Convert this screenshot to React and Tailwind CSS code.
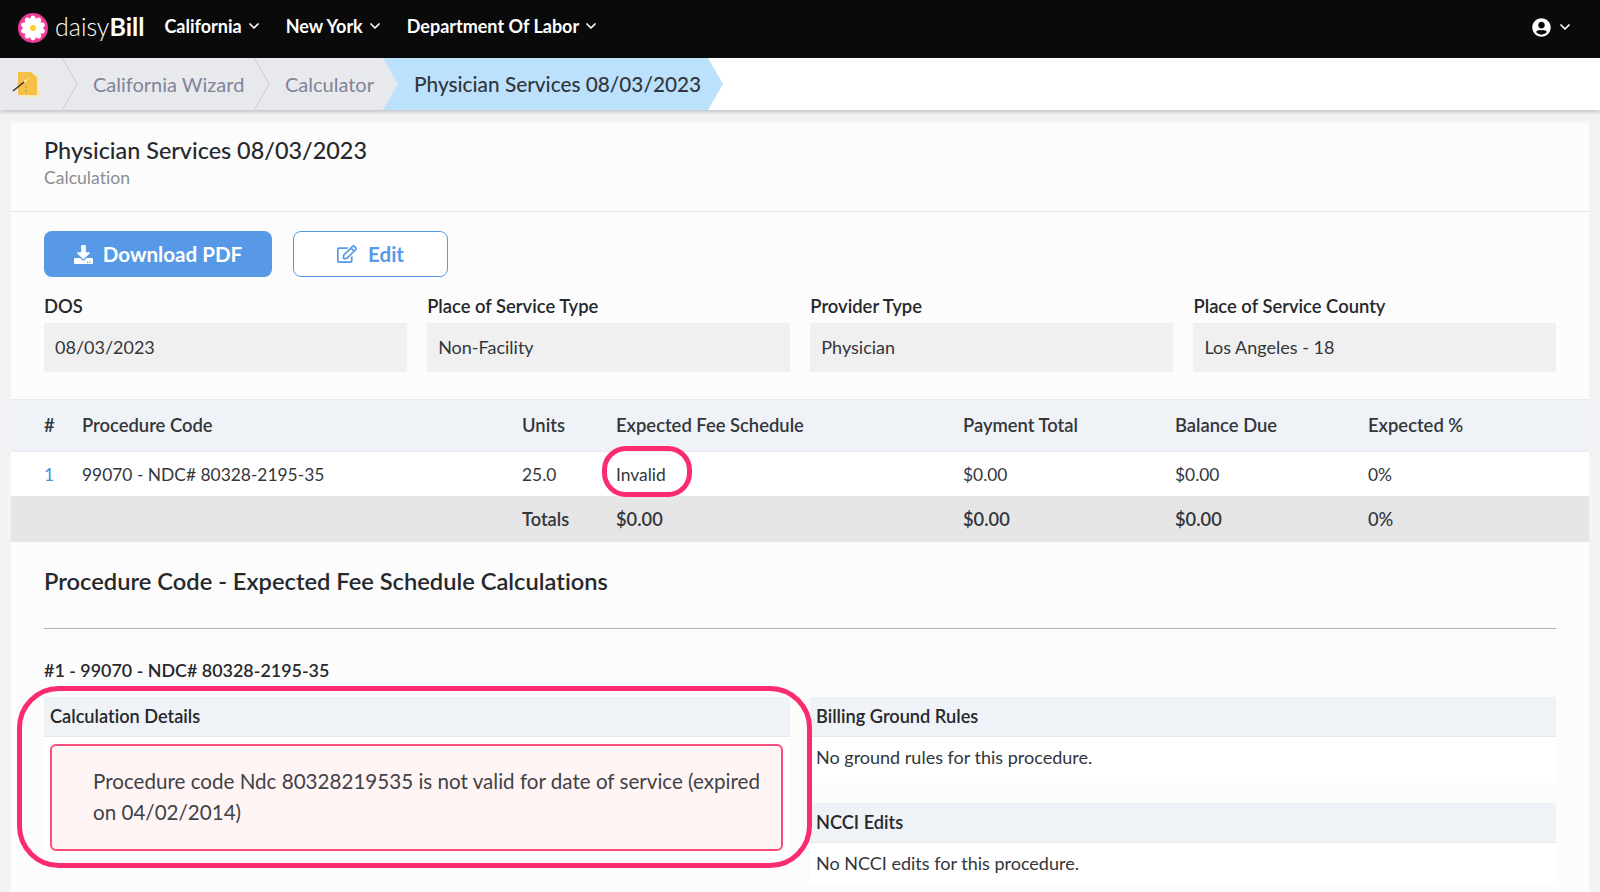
import React from 'react';
import { FaDownload, FaRegEdit, FaUserCircle } from 'react-icons/fa';
import { ChevronDown } from 'lucide-react';

const PETALS = [0, 36, 72, 108, 144, 180, 216, 252, 288, 324];

function DaisyLogo() {
  return (
    <svg viewBox="0 0 30 30" className="h-[30px] w-[30px] shrink-0">
      <circle cx="15" cy="15" r="15" fill="#ee3d96" />
      {PETALS.map((angle) => (
        <ellipse key={angle} cx="15" cy="7.6" rx="3.1" ry="5" fill="#ffffff" transform={`rotate(${angle} 15 15)`} />
      ))}
      <circle cx="15" cy="15" r="3" fill="#fbd52c" />
    </svg>
  );
}

function WizardIcon() {
  return (
    <svg viewBox="0 0 28 28" className="h-7 w-7 shrink-0">
      <path d="M8 4h17l2 23H10z" fill="#f8e6b4" />
      <path d="M6 2h13l6 6v17H6z" fill="#f6bf45" />
      <path d="M1 21l11-9" stroke="#333333" strokeWidth="1.6" />
      <path d="M12 12l3-2.5" stroke="#fff4c4" strokeWidth="1.6" />
      <circle cx="17" cy="8" r="0.8" fill="#fff4c4" />
      <circle cx="14" cy="17" r="0.9" fill="#d9a02e" />
      <circle cx="14" cy="21" r="0.9" fill="#66b36b" />
    </svg>
  );
}

function CrumbChevron() {
  return (
    <svg viewBox="0 0 16 52" className="h-[52px] w-4 shrink-0" fill="none">
      <path d="M0.5 0L15 26L0.5 52" stroke="#c9cbd2" strokeWidth="1" />
    </svg>
  );
}

function NavItem({ label }) {
  return (
    <button className="flex items-center gap-[4px] text-[18px] font-bold text-white">
      {label}
      <ChevronDown className="h-[16px] w-[16px]" strokeWidth={2.6} />
    </button>
  );
}

function Field({ label, value }) {
  return (
    <div>
      <div className="text-[18.4px] font-semibold leading-[24px] text-[#26282c]">{label}</div>
      <div className="mt-[5px] flex h-[49px] items-center bg-[#f0f0f0] px-[11px] text-[18px] text-[#33363b]">{value}</div>
    </div>
  );
}

function PanelHeader({ children }) {
  return (
    <div className="flex h-[40px] items-center border-b border-[#e6e8ec] bg-[#eff2f7] px-[6px] text-[18.2px] font-semibold text-[#26282c]">
      {children}
    </div>
  );
}

const ROW_CLASS = 'grid grid-cols-[38px_440px_94px_347px_212px_193px_1fr] items-center pl-[33px]';

export default function App() {
  return (
    <div className="h-[892px] overflow-hidden bg-[#f3f3f5] font-['Lato',sans-serif] text-[#33363b] [font-variant-ligatures:none]">
      <header className="flex h-[58px] items-center bg-[#0a0a0a] pb-[3px] pl-[18px] pr-[27px]">
        <DaisyLogo />
        <div className="ml-[7px] pb-[3px] text-[25px] font-light leading-none text-white">
          daisy<span className="font-bold">Bill</span>
        </div>
        <nav className="ml-[20px] flex items-center gap-[24px] pb-[3px]">
          <NavItem label="California" />
          <NavItem label="New York" />
          <NavItem label="Department Of Labor" />
        </nav>
        <div className="ml-auto flex items-center gap-[6px] pb-[1px] text-white">
          <FaUserCircle className="h-[19px] w-[19px]" />
          <ChevronDown className="h-[16px] w-[16px]" strokeWidth={2.6} />
        </div>
      </header>

      <div className="flex h-[52px] bg-white shadow-[0_2px_4px_rgba(0,0,0,0.2)]">
        <div className="flex w-[398px] items-center bg-[#e8e9ed] text-[20px] text-[#7f8498]">
          <div className="w-[62px] pl-[12px]">
            <WizardIcon />
          </div>
          <CrumbChevron />
          <span className="ml-[15px] w-[161px]">California Wizard</span>
          <CrumbChevron />
          <span className="ml-[15px]">Calculator</span>
        </div>
        <div className="-ml-[15px] flex w-[340px] items-center bg-[#bbe1fd] pl-[31px] text-[20.8px] font-medium text-[#33363b] [clip-path:polygon(0_0,calc(100%-15px)_0,100%_50%,calc(100%-15px)_100%,0_100%,15px_50%)]">
          Physician Services 08/03/2023
        </div>
      </div>

      <main className="mx-[11px] mt-[13px] h-[769px] bg-[#fcfcfc]">
        <div className="h-[89px] border-b border-[#e8e8e8] px-[33px] pt-[11px]">
          <h1 className="text-[23.4px] font-medium leading-[32px] text-[#26282c]">Physician Services 08/03/2023</h1>
          <p className="text-[17.6px] leading-[24px] text-[#8a8d92]">Calculation</p>
        </div>

        <div className="px-[33px] pt-[19px]">
          <div className="flex gap-[21px]">
            <button className="flex h-[46px] w-[228px] items-center justify-center gap-[10px] rounded-[8px] bg-[#5799e7] text-[20.6px] font-bold text-white">
              <FaDownload className="h-[19px] w-[19px]" />
              Download PDF
            </button>
            <button className="flex h-[46px] w-[155px] items-center justify-center gap-[11px] rounded-[8px] border border-[#5799e7] bg-white text-[20.6px] font-bold text-[#5799e7]">
              <FaRegEdit className="h-[20px] w-[20px]" />
              Edit
            </button>
          </div>
          <div className="mt-[17px] grid grid-cols-4 gap-x-[20.67px]">
            <Field label="DOS" value="08/03/2023" />
            <Field label="Place of Service Type" value="Non-Facility" />
            <Field label="Provider Type" value="Physician" />
            <Field label="Place of Service County" value="Los Angeles - 18" />
          </div>
        </div>

        <div className="mt-[27px]">
          <div className={`${ROW_CLASS} h-[53px] border-y border-[#e8eaee] bg-[#eff2f7] pt-[1px] text-[18.4px] font-semibold text-[#33363b]`}>
            <span>#</span>
            <span>Procedure Code</span>
            <span>Units</span>
            <span>Expected Fee Schedule</span>
            <span>Payment Total</span>
            <span>Balance Due</span>
            <span>Expected %</span>
          </div>
          <div className={`${ROW_CLASS} h-[44px] bg-white pt-[2px] text-[17.4px]`}>
            <span className="text-[#4a90e2]">1</span>
            <span>99070 - NDC# 80328-2195-35</span>
            <span>25.0</span>
            <span className="relative">
              Invalid
              <span className="absolute -left-[14px] -top-[16px] h-[51px] w-[90px] rounded-[24px] border-[5px] border-[#fb2c6d]" />
            </span>
            <span>$0.00</span>
            <span>$0.00</span>
            <span>0%</span>
          </div>
          <div className={`${ROW_CLASS} h-[46px] bg-[#e6e6e6] pt-[1px] text-[18.3px] font-semibold`}>
            <span />
            <span />
            <span>Totals</span>
            <span>$0.00</span>
            <span>$0.00</span>
            <span>$0.00</span>
            <span className="font-medium">0%</span>
          </div>
        </div>

        <div className="px-[33px]">
          <h2 className="pt-[24px] text-[23.7px] font-semibold leading-[30px] text-[#26282c]">
            Procedure Code - Expected Fee Schedule Calculations
          </h2>
          <div className="mt-[32px] border-t border-[#b5b5b5]" />
          <h3 className="mt-[29px] text-[17.9px] font-semibold leading-[24px] text-[#26282c]">#1 - 99070 - NDC# 80328-2195-35</h3>

          <div className="mt-[15px] grid grid-cols-2 gap-x-[20px]">
            <div className="relative">
              <PanelHeader>Calculation Details</PanelHeader>
              <div className="bg-white py-[7px] pl-[6px] pr-[7px]">
                <div className="h-[107px] rounded-[6px] border-2 border-[#fb4d78] bg-[#fff5f5] py-[20px] pl-[41px] pr-[14px] text-[20.6px] leading-[31px] text-[#3f4247]">
                  Procedure code Ndc 80328219535 is not valid for date of service (expired on 04/02/2014)
                </div>
              </div>
              <div className="absolute -left-[27px] -right-[22px] -top-[11px] h-[182px] rounded-[42px] border-[5px] border-[#fb2c6d]" />
            </div>
            <div>
              <PanelHeader>Billing Ground Rules</PanelHeader>
              <div className="h-[46px] bg-white px-[6px] pt-[7px] text-[18px] text-[#33363b]">No ground rules for this procedure.</div>
              <div className="mt-[20px]">
                <PanelHeader>NCCI Edits</PanelHeader>
                <div className="h-[41px] bg-white px-[6px] pt-[7px] text-[18px] text-[#33363b]">No NCCI edits for this procedure.</div>
              </div>
            </div>
          </div>
        </div>
      </main>
    </div>
  );
}
